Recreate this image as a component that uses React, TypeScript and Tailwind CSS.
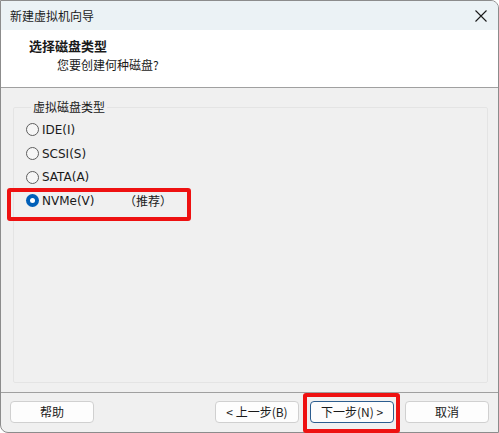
import { useState } from "react";

const OPTIONS = [
  { id: "ide", label: "IDE(I)" },
  { id: "scsi", label: "SCSI(S)" },
  { id: "sata", label: "SATA(A)" },
  { id: "nvme", label: "NVMe(V)", note: "（推荐）" },
];

const Radio = ({ checked }: { checked: boolean }) =>
  checked ? (
    <span className="w-[13px] h-[13px] rounded-full bg-[#005fb8] flex items-center justify-center shrink-0">
      <span className="w-[5px] h-[5px] rounded-full bg-white" />
    </span>
  ) : (
    <span className="w-[13px] h-[13px] rounded-full border border-[#5e5e5e] bg-[#f6f6f6] shrink-0" />
  );

const Button = ({ label, focused }: { label: string; focused?: boolean }) => (
  <button
    className={`w-[84px] h-[22px] rounded-[4px] bg-[#fdfdfd] text-[12px] text-[#1a1a1a] flex items-center justify-center ${
      focused ? "border border-[#2c5d8f]" : "border border-[#d0d0d0]"
    }`}>
    {label}
  </button>
);

export default function App() {
  const [selected, setSelected] = useState("nvme");

  return (
    <div
      className="w-[499px] h-[433px] bg-white relative overflow-hidden text-[#1a1a1a]"
      style={{ fontFamily: '"Noto Sans CJK SC", "Noto Sans", sans-serif' }}>
      <div className="h-[433px] w-[499px] flex flex-col border border-[#8c8c8c] rounded-tr-[8px] rounded-bl-[8px] bg-[#f0f0f0] overflow-hidden">
        {/* title bar */}
        <div className="h-[29px] bg-[#ebf2f5] flex items-center justify-between pl-[9px] pr-[10px] shrink-0">
          <span className="text-[12px] leading-none">新建虚拟机向导</span>
          <svg width="12" height="12" viewBox="0 0 12 12" className="mr-[1px]">
            <path d="M0.5 0.5 L11.5 11.5 M11.5 0.5 L0.5 11.5" stroke="#1a1a1a" strokeWidth="1.1" />
          </svg>
        </div>

        {/* header */}
        <div className="h-[58px] bg-white border-b border-[#a0a0a0] shrink-0 pt-[7px]">
          <p className="pl-[28px] text-[13px] font-bold leading-[18px]">选择磁盘类型</p>
          <p className="pl-[56px] text-[12px] leading-[18px] mt-[1px]">您要创建何种磁盘?</p>
        </div>

        {/* body */}
        <div className="flex-1 pt-[11px] pl-[12px] pr-[10px] pb-[9px] flex">
          <fieldset className="flex-1 border border-[#e4e4e4] rounded-[2px] pl-[12px] pt-[3px]">
            <legend className="text-[12px] leading-[16px] ml-[5px] px-[2px]">虚拟磁盘类型</legend>
            <div className="flex flex-col">
              {OPTIONS.map((opt) => (
                <div
                  key={opt.id}
                  onClick={() => setSelected(opt.id)}
                  className="h-[23.7px] flex items-center gap-[3px] text-[12px] cursor-default">
                  <Radio checked={selected === opt.id} />
                  <span
                    className="w-[79px]"
                    style={{ fontFamily: '"DejaVu Sans", "Noto Sans CJK SC", sans-serif' }}>
                    {opt.label}
                  </span>
                  {opt.note && <span>{opt.note}</span>}
                </div>
              ))}
            </div>
          </fieldset>
        </div>

        {/* footer */}
        <div className="h-[40px] border-t border-[#a0a0a0] shrink-0 flex items-start pt-[8px] pl-[9px] pr-[9px]">
          <Button label="帮助" />
          <div className="flex-1" />
          <div className="flex gap-[11px]">
            <Button label="< 上一步(B)" />
            <Button label="下一步(N) >" focused />
            <Button label="取消" />
          </div>
        </div>
      </div>

      {/* red annotation boxes */}
      <div className="absolute left-[7px] top-[188px] w-[184px] h-[33px] border-[4px] border-[#ee1111] rounded-[3px]" />
      <div className="absolute left-[303px] top-[393px] w-[97px] h-[40px] border-[4px] border-[#ee1111] rounded-[3px]" />
    </div>
  );
}
